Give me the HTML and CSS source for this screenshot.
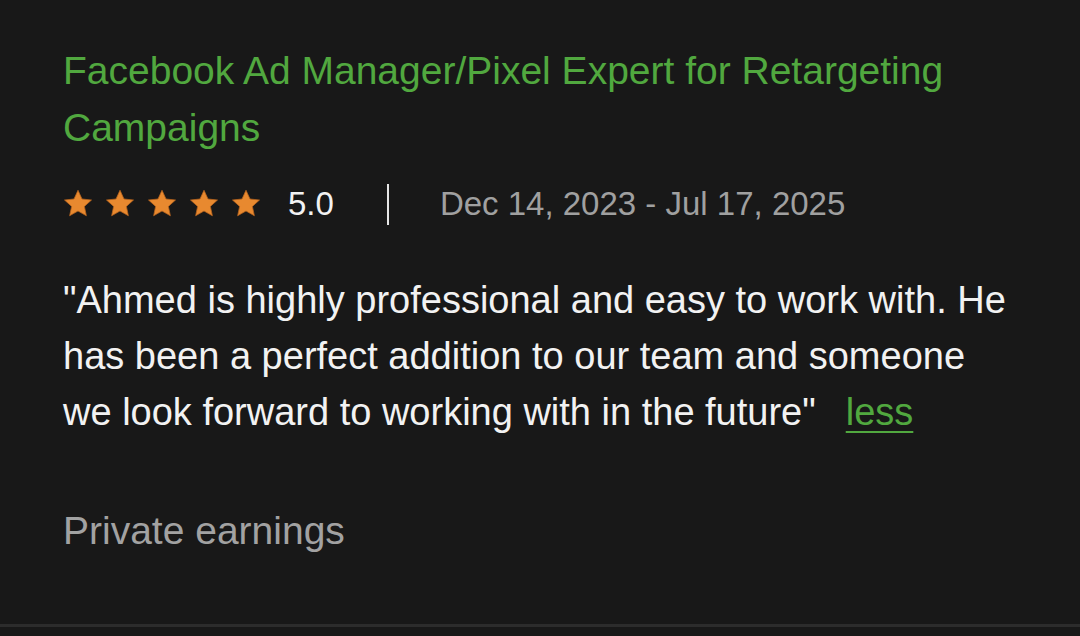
FILE: index.html
```html
<!DOCTYPE html>
<html lang="en">
<head>
  <meta charset="UTF-8">
  <meta name="viewport" content="width=device-width, initial-scale=1.0">
  <title>Work history</title>
  <link rel="stylesheet" href="styles.css">
</head>
<body>
  <div class="job">
    <div class="job-title">Facebook Ad Manager/Pixel Expert for Retargeting Campaigns</div>

    <div class="rating-row">
      <div class="stars">
        <svg class="star" viewBox="0 0 24 24"><path d="M12 1l3.2 7 7.6.8-5.7 5.1 1.6 7.5L12 17.6l-6.7 3.8 1.6-7.5-5.7-5.1 7.6-.8z"/></svg>
        <svg class="star" viewBox="0 0 24 24"><path d="M12 1l3.2 7 7.6.8-5.7 5.1 1.6 7.5L12 17.6l-6.7 3.8 1.6-7.5-5.7-5.1 7.6-.8z"/></svg>
        <svg class="star" viewBox="0 0 24 24"><path d="M12 1l3.2 7 7.6.8-5.7 5.1 1.6 7.5L12 17.6l-6.7 3.8 1.6-7.5-5.7-5.1 7.6-.8z"/></svg>
        <svg class="star" viewBox="0 0 24 24"><path d="M12 1l3.2 7 7.6.8-5.7 5.1 1.6 7.5L12 17.6l-6.7 3.8 1.6-7.5-5.7-5.1 7.6-.8z"/></svg>
        <svg class="star" viewBox="0 0 24 24"><path d="M12 1l3.2 7 7.6.8-5.7 5.1 1.6 7.5L12 17.6l-6.7 3.8 1.6-7.5-5.7-5.1 7.6-.8z"/></svg>
      </div>
      <span class="score">5.0</span>
      <span class="sep"></span>
      <span class="dates">Dec 14, 2023 - Jul 17, 2025</span>
    </div>

    <p class="feedback"><span class="quote">"Ahmed is highly professional and easy to work with. He has been a perfect addition to our team and someone we look forward to working with in the future"</span><a class="less" href="#">less</a></p>

    <div class="earnings">Private earnings</div>
  </div>
</body>
</html>
```

FILE: styles.css
```css
body {
  margin: 0;
  background: #181818;
  font-family: "Liberation Sans", Arial, sans-serif;
  color: #f2f2f2;
}

.job {
  padding: 42px 63px 0;
  height: 582px;
  border-bottom: 3px solid #2c2c2c;
}

.job-title {
  color: #51a83f;
  font-size: 39px;
  line-height: 57px;
  width: 920px;
}

.rating-row {
  display: flex;
  align-items: center;
  margin-top: 26px;
  height: 44px;
}

.stars {
  display: flex;
  gap: 12px;
}

.star {
  width: 30px;
  height: 30px;
  fill: #e8892f;
  stroke: #b8641e;
  stroke-width: 0.6;
  stroke-linejoin: round;
}

.score {
  margin-left: 27px;
  font-size: 33px;
  color: #f2f2f2;
}

.sep {
  width: 2px;
  height: 41px;
  background: #e6e6e6;
  margin: 0 51px 0 53px;
}

.dates {
  font-size: 33px;
  color: #a0a0a0;
}

.feedback {
  margin: 46px 0 0;
  font-size: 38px;
  line-height: 56px;
  width: 960px;
}

.less {
  color: #51a83f;
  margin-left: 30px;
  text-decoration-thickness: 2px;
  text-underline-offset: 6px;
}

.earnings {
  margin-top: 69px;
  font-size: 39px;
  color: #a2a2a2;
}
```
